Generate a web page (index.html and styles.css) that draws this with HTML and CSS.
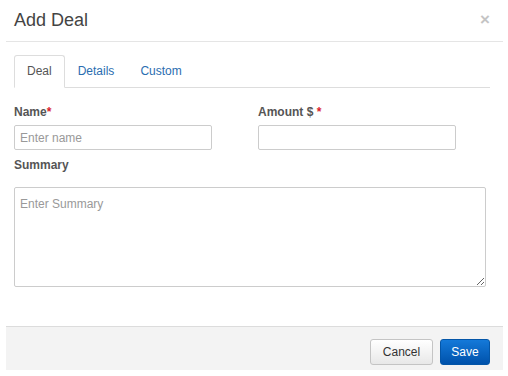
FILE: index.html
```html
<!DOCTYPE html>
<html>
<head>
<meta charset="utf-8">
<link rel="stylesheet" href="styles.css">
</head>
<body>
<div class="modal">
  <div class="modal-header">
    <h4 class="title">Add Deal</h4>
    <button class="close" type="button">×</button>
  </div>
  <div class="modal-body">
    <ul class="tabs">
      <li class="tab active"><a>Deal</a></li>
      <li class="tab"><a>Details</a></li>
      <li class="tab"><a>Custom</a></li>
    </ul>
    <div class="form">
      <div class="row">
        <div class="field">
          <label class="label">Name<span class="req">*</span></label>
          <input class="input" type="text" placeholder="Enter name">
        </div>
        <div class="field">
          <label class="label">Amount $ <span class="req">*</span></label>
          <input class="input" type="text">
        </div>
      </div>
      <label class="label summary-label">Summary</label>
      <textarea class="textarea" placeholder="Enter Summary"></textarea>
    </div>
  </div>
  <div class="modal-footer">
    <button class="btn btn-default" type="button">Cancel</button>
    <button class="btn btn-primary" type="button">Save</button>
  </div>
</div>
</body>
</html>
```

FILE: styles.css
```css
html, body {
  margin: 0;
  padding: 0;
  background: #fff;
}
body {
  font-family: "Liberation Sans", Arial, sans-serif;
  font-size: 12px;
  color: #555;
}
.modal {
  margin-left: 6px;
  width: 497px;
  background: #fff;
}
.modal-header {
  display: flex;
  justify-content: space-between;
  align-items: flex-start;
  padding: 10px 13px 11px 8px;
  border-bottom: 1px solid #e5e5e5;
}
.title {
  margin: 0;
  font-size: 18px;
  line-height: 20px;
  font-weight: normal;
  color: #444;
}
.close {
  border: 0;
  background: none;
  padding: 0;
  margin: 0;
  font-family: "Liberation Sans", Arial, sans-serif;
  font-size: 17px;
  font-weight: bold;
  line-height: 20px;
  color: #c4c4c4;
  cursor: pointer;
}
.modal-body {
  padding: 13px 13px 39px 8px;
}
.tabs {
  display: flex;
  margin: 0;
  padding: 0;
  list-style: none;
  border-bottom: 1px solid #ddd;
}
.tab {
  margin-bottom: -1px;
}
.tab a {
  display: block;
  padding: 0 12px;
  line-height: 31px;
  border: 1px solid transparent;
  border-radius: 3px 3px 0 0;
  color: #2a6db0;
  font-size: 12px;
  cursor: pointer;
}
.tab.active a {
  border-color: #ddd #ddd #fff;
  background: #fff;
  color: #555;
}
.form {
  padding-top: 16px;
}
.row {
  display: grid;
  grid-template-columns: 244px 244px;
}
.label {
  display: block;
  font-size: 12px;
  font-weight: bold;
  line-height: 17px;
  margin-bottom: 4px;
  color: #555;
}
.req {
  color: #d9232d;
}
.input {
  display: block;
  box-sizing: border-box;
  width: 198px;
  height: 25px;
  margin: 0;
  padding: 0 5px;
  border: 1px solid #ccc;
  border-radius: 2px;
  font-family: "Liberation Sans", Arial, sans-serif;
  font-size: 12px;
  color: #555;
  outline: none;
}
.input::placeholder,
.textarea::placeholder {
  color: #999;
}
.summary-label {
  margin-top: 7px;
  margin-bottom: 13px;
}
.textarea {
  display: block;
  box-sizing: border-box;
  width: 472px;
  height: 100px;
  margin: 0;
  padding: 9px 5px;
  border: 1px solid #ccc;
  border-radius: 2px;
  font-family: "Liberation Sans", Arial, sans-serif;
  font-size: 12px;
  color: #555;
  outline: none;
}
.modal-footer {
  display: flex;
  justify-content: flex-end;
  gap: 7px;
  padding: 12px 13px 5px;
  border-top: 1px solid #dcdcdc;
  background: #f3f3f3;
}
.btn {
  box-sizing: border-box;
  height: 26px;
  margin: 0;
  padding: 0;
  border-radius: 3px;
  font-family: "Liberation Sans", Arial, sans-serif;
  font-size: 12px;
  line-height: 24px;
  text-align: center;
  cursor: pointer;
}
.btn-default {
  width: 63px;
  border: 1px solid #c4c4c4;
  background: linear-gradient(#ffffff, #e8e8e8);
  color: #333;
}
.btn-primary {
  width: 50px;
  border: 1px solid #0456a8;
  background: linear-gradient(#1479d9, #0052ab);
  color: #fff;
}
```
